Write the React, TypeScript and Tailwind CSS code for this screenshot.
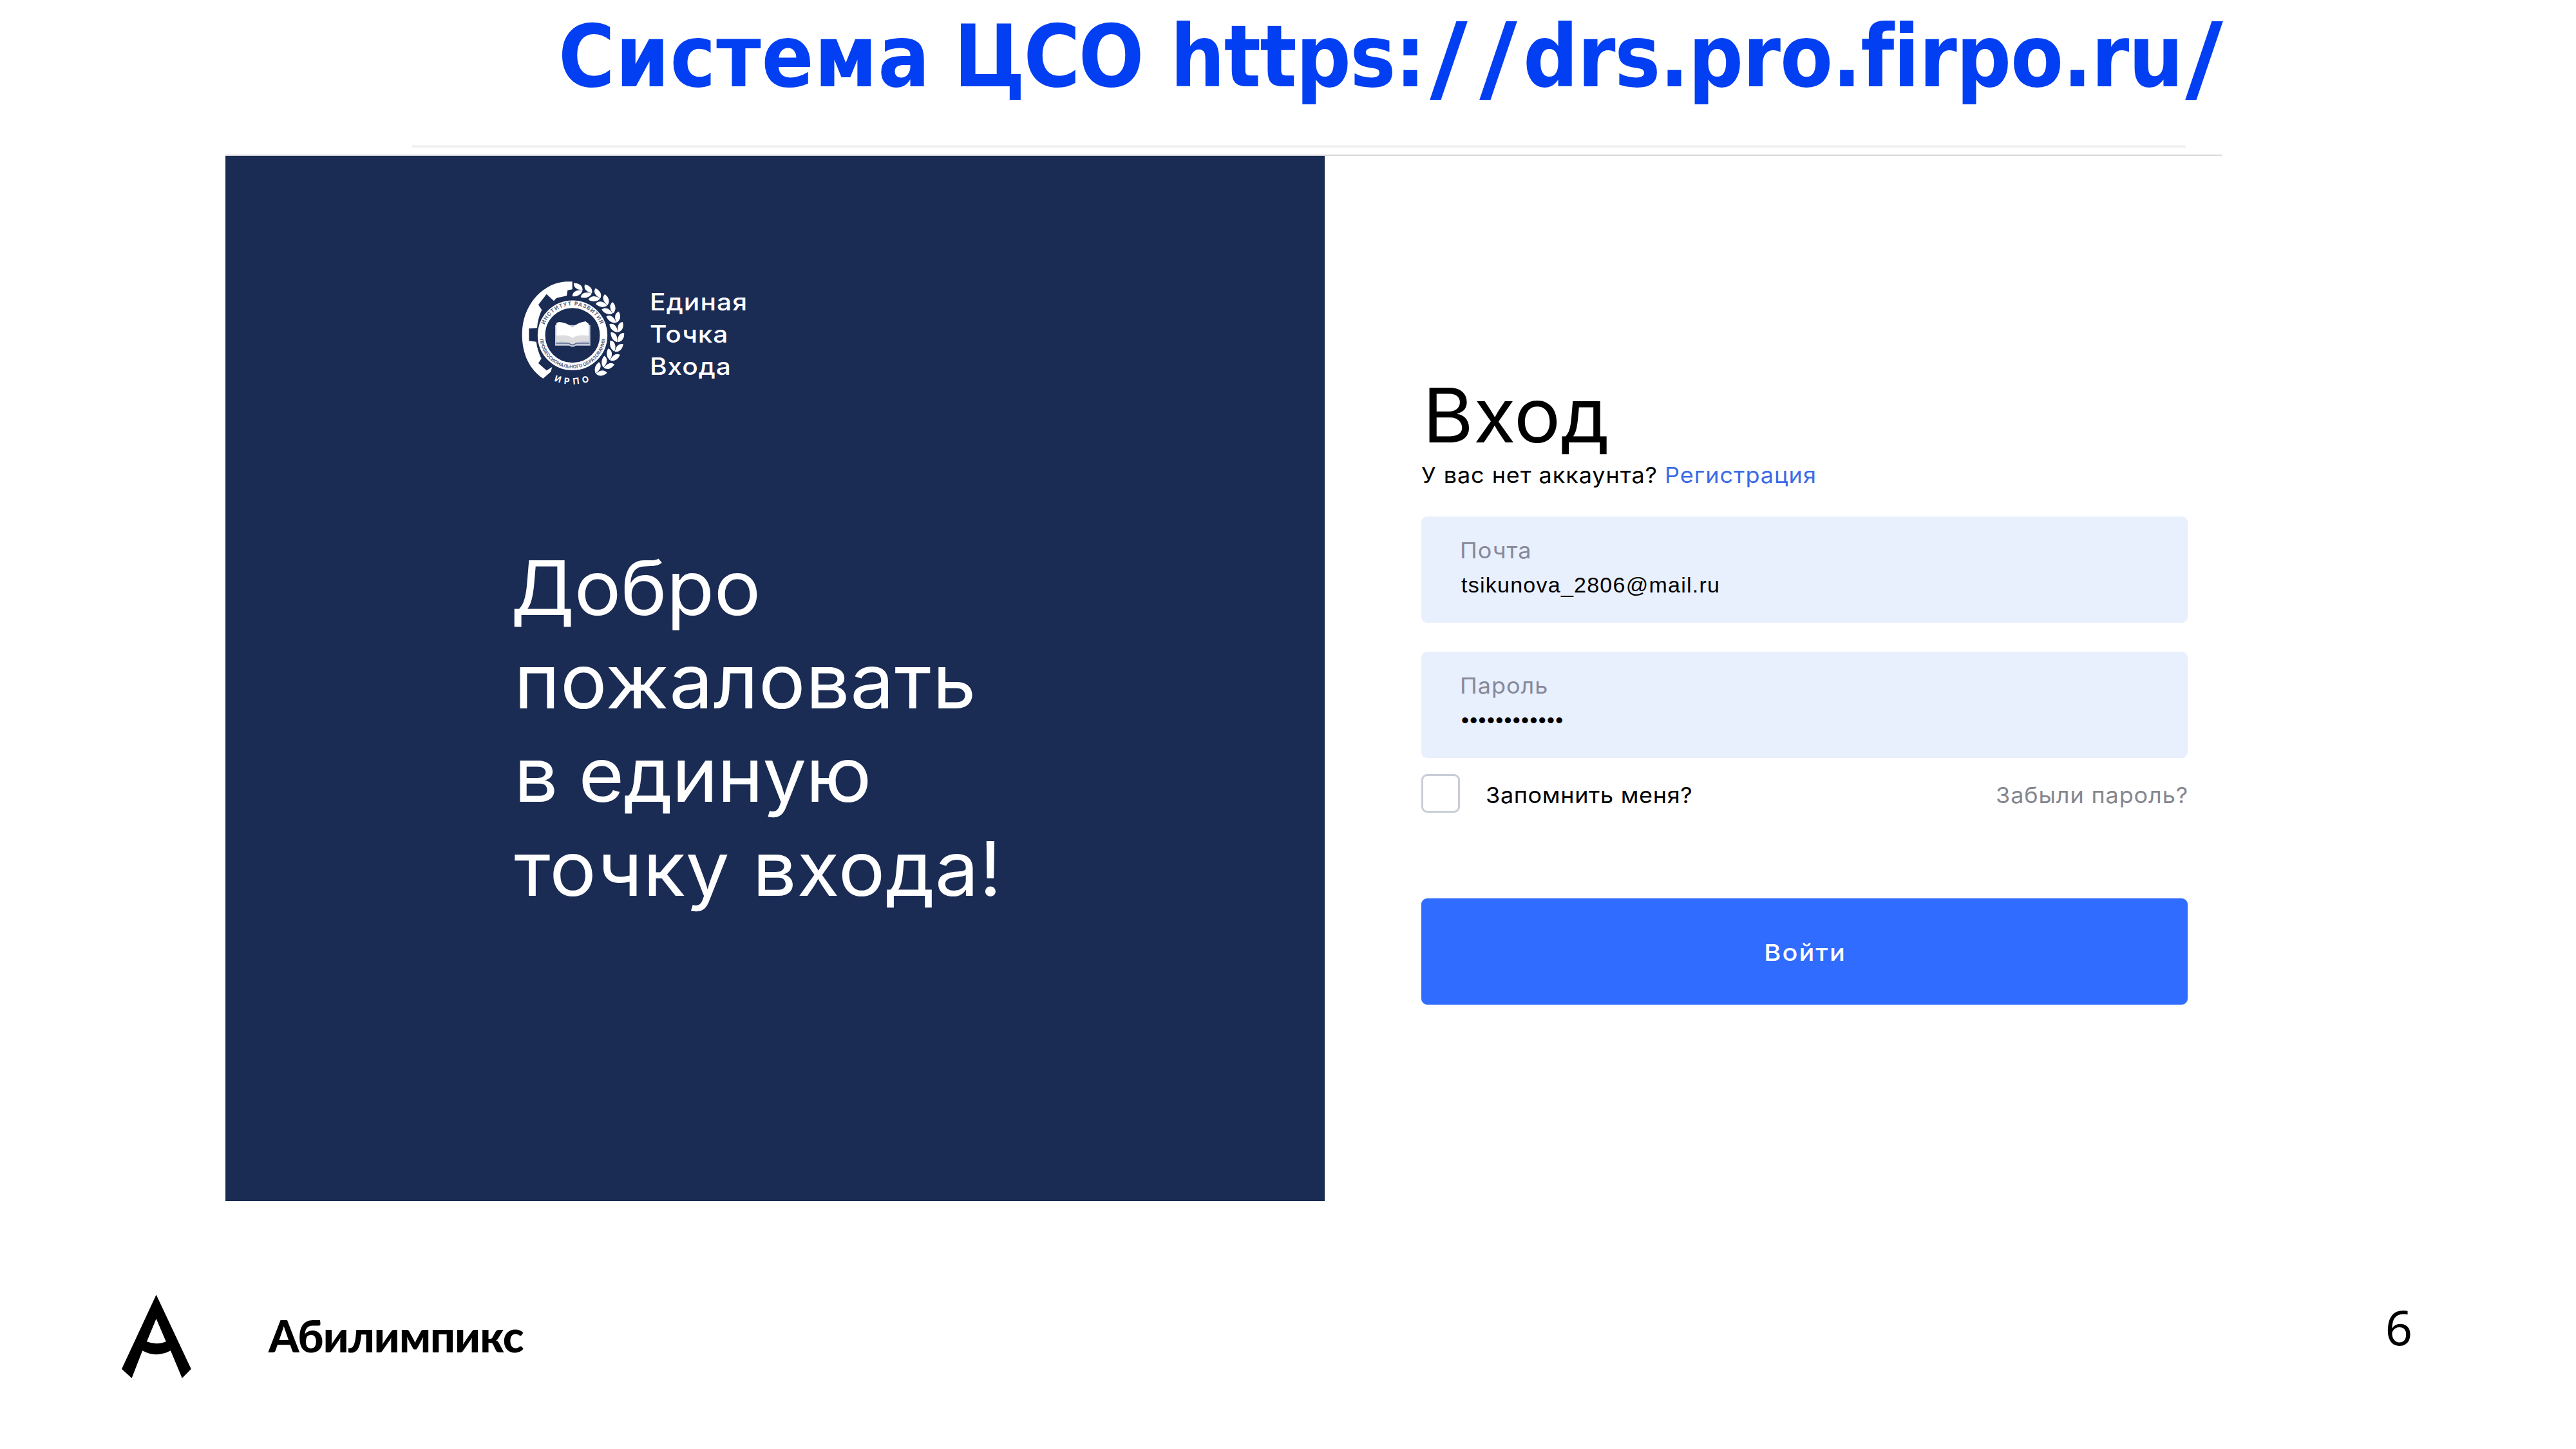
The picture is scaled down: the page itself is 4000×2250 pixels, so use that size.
const LEAF_COUNT = 12;

function Laurel() {
  const leaves = Array.from({ length: LEAF_COUNT }, (_, i) => -82 + (i * 137) / (LEAF_COUNT - 1));
  return (
    <g fill="#fff" stroke="#fff" strokeWidth="5" strokeLinejoin="round">
      {leaves.map((a) => (
        <g key={a} transform={`translate(268 268) rotate(${a})`}>
          <path d="M207 14 C190 10 179 -6 178 -24 C194 -26 207 -12 207 14Z" />
          <path d="M213 14 C212 -10 220 -24 236 -26 C239 -6 230 10 213 14Z" />
        </g>
      ))}
    </g>
  );
}

function Seal() {
  return (
    <svg viewBox="0 0 540 540" className="size-[180px] shrink-0 overflow-visible">
      <defs>
        <path id="ringTop" d="M128 272 A139 139 0 0 1 406 272" />
        <path id="ringBottom" d="M113 272 A154 154 0 0 0 421 272" />
        <path id="nameArc" d="M65 388 A238 238 0 0 0 469 388" />
      </defs>
      <path
        fill="#fff"
        d="M266 22 L266 58 L244 62 L240 88 L192 98 L180 112 L146 80 L108 130 L124 154 Q106 190 102 238 L64 240 L64 298 L98 302 Q104 345 122 380 L108 402 L146 436 L172 420 L166 442 L130 473 C72 436 32 366 32 268 C32 130 130 28 236 22 Z"
      />
      <Laurel />
      <circle cx="267" cy="272" r="145" fill="none" stroke="#fff" strokeWidth="35" />
      <g fill="#1a2b54" fillOpacity="0.75" className="font-['Inter'] font-bold">
        <text fontSize="25" letterSpacing="3">
          <textPath href="#ringTop" startOffset="50%" textAnchor="middle">ИНСТИТУТ РАЗВИТИЯ</textPath>
        </text>
        <text fontSize="22">
          <textPath href="#ringBottom" startOffset="50%" textAnchor="middle">ПРОФЕССИОНАЛЬНОГО ОБРАЗОВАНИЯ</textPath>
        </text>
      </g>
      <path fill="#c3c9da" d="M186 224 H350 V320 H282 Q267 332 252 320 H186 Z" />
      <path fill="#fff" d="M192 214 L206 210 Q244 214 267 236 Q290 212 328 207 L342 218 V300 Q292 296 267 312 Q242 296 192 302 Z" />
      <path fill="#dcdcde" d="M192 274 Q240 266 267 284 Q294 266 342 274 V300 Q292 296 267 312 Q242 296 192 302 Z" />
      <path fill="none" stroke="#5d688a" strokeWidth="5" d="M190 309 H250 Q267 324 284 309 H346" />
      <text fill="#fff" className="font-['Inter'] font-bold" fontSize="40" letterSpacing="17">
        <textPath href="#nameArc" startOffset="51%" textAnchor="middle">ИРПО</textPath>
      </text>
    </svg>
  );
}

function Slash() {
  return (
    <span className="inline-block w-[77px] origin-[50%_76%] translate-y-[7px] scale-x-[1.34] scale-y-[1.11] text-center">
      /
    </span>
  );
}

function Field({ label, value, valueClass }: { label: string; value: string; valueClass: string }) {
  return (
    <div className="h-[165px] rounded-[9px] bg-[#e8effd] pt-[33px] pl-[60px]">
      <div className="origin-left scale-x-[1.06] text-[34px] leading-[40px] tracking-[0.9px] text-[#85899a]">{label}</div>
      <div className={`mt-[8px] font-['Liberation_Sans',sans-serif] text-[34px] leading-[50px] text-black ${valueClass}`}>
        {value}
      </div>
    </div>
  );
}

export default function App() {
  return (
    <div className="h-[2250px] w-[4000px] overflow-hidden bg-white font-['Inter',sans-serif] text-black">
      <h1 className="flex h-[176px] pl-[867px] font-['DejaVu_Sans_Condensed','DejaVu_Sans',sans-serif] text-[133px] leading-[176px] font-bold whitespace-nowrap text-[#033ff2]">
        <span className="w-[614px] tracking-[0.9px]">Система</span>
        <span className="w-[336px] tracking-[-2.6px]">ЦСО</span>
        <span className="w-[394px] tracking-[-1.5px]">https:</span>
        <Slash />
        <Slash />
        <span className="w-[1019px] tracking-[-1.2px]">drs.pro.firpo.ru</span>
        <Slash />
      </h1>

      <div className="mt-[49px] ml-[640px] h-[5px] w-[2754px] bg-[#f3f3f3]" />
      <div className="mt-[10px] ml-[350px] h-[2px] w-[3100px] bg-[#d9d9dc]" />

      <main className="ml-[350px] flex h-[1623px] w-[3100px]">
        <section className="w-[1707px] bg-[#1a2b54] pt-[188px] pl-[443px] text-white">
          <div className="flex pl-[7px]">
            <Seal />
            <div className="mt-[14px] ml-[29px] origin-left scale-x-[1.1] text-[37px] leading-[50px] font-medium tracking-[0.8px]">
              <div className="tracking-[1px]">Единая</div>
              <div>Точка</div>
              <div>Входа</div>
            </div>
          </div>
          <h2 className="mt-[230px] origin-left scale-x-[1.035] text-[117px] leading-[145.2px] font-[430] whitespace-nowrap">
            <div className="tracking-[-0.5px]">Добро</div>
            <div className="pl-[5px] tracking-[0.6px]">пожаловать</div>
            <div className="pl-[5px] tracking-[-1px]">в единую</div>
            <div className="pl-[5px] tracking-[0.7px]">точку входа!</div>
          </h2>
        </section>

        <section className="flex w-[1340px] flex-col pt-[344px] pl-[150px]">
          <h2 className="origin-left scale-x-[1.03] pl-[2px] text-[117px] leading-[117px] font-[430] tracking-[0px]">Вход</h2>
          <p className="mt-[11px] flex text-[34px] leading-[48px] whitespace-nowrap">
            <span className="w-[377px] origin-left scale-x-[1.06] tracking-[0.87px]">У вас нет аккаунта?</span>
            <a className="ml-px origin-left scale-x-[1.06] tracking-[0.95px] text-[#3c6be6]">Регистрация</a>
          </p>
          <div className="mt-[40px] flex flex-col gap-[45px]">
            <Field label="Почта" value="tsikunova_2806@mail.ru" valueClass="pl-[2px] tracking-[1.25px]" />
            <Field label="Пароль" value="••••••••••••" valueClass="pl-[2px] tracking-[1.4px]" />
          </div>
          <div className="mt-[25px] flex h-[60px] text-[34px] leading-[60px] whitespace-nowrap">
            <span className="size-[60px] rounded-[9px] border-[3px] border-[#c9cdd6]" />
            <span className="mt-[3px] ml-[40px] origin-left scale-x-[1.06] tracking-[0.6px]">Запомнить меня?</span>
            <a className="mt-[3px] mr-[-1px] ml-auto origin-right scale-x-[1.06] tracking-[0.8px] text-[#85878f]">Забыли пароль?</a>
          </div>
          <button className="mt-[133px] h-[165px] rounded-[9px] bg-[#306cff] pt-[2px] text-center text-[36px] font-medium tracking-[1.9px] text-white">
            <span className="inline-block scale-x-[1.1] pl-[2px]">Войти</span>
          </button>
        </section>
      </main>

      <footer className="mt-[145px] flex pl-[189px]">
        <svg viewBox="0 0 108 131" className="h-[131px] w-[108px] shrink-0">
          <path
            fillRule="evenodd"
            d="M53.6 .5 L107.8 115.7 L93.8 130 L75.9 87.3 Q53.6 99 32.2 87.3 L15.6 130 L0 115.7Z M53.6 37.7 L38.9 73.3 Q53.6 79 68.8 73.3Z"
          />
        </svg>
        <div className="mt-[24px] ml-[120px] font-['Lato',sans-serif] text-[68px] leading-[80px] font-black tracking-[-0.85px]">
          Абилимпикс
        </div>
        <div className="mt-[1px] mr-[254px] ml-auto font-['Noto_Sans',sans-serif] text-[74px] leading-[100px]">6</div>
      </footer>
    </div>
  );
}
